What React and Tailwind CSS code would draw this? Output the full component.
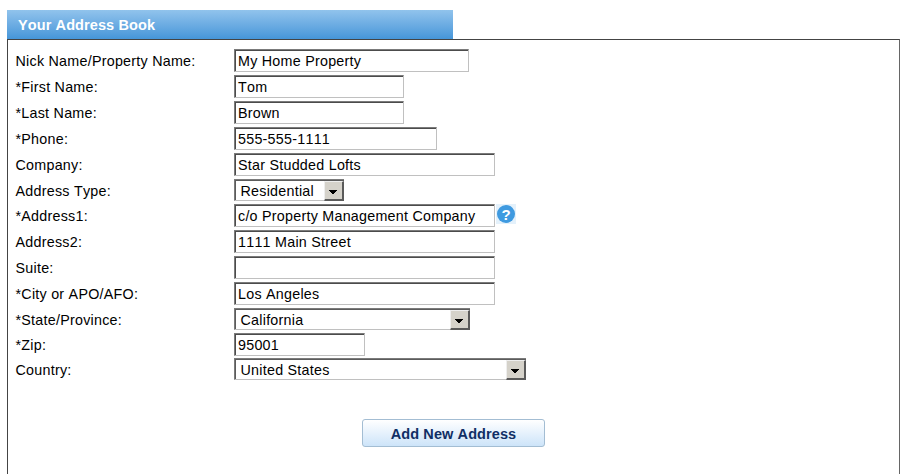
const ROWS = [
  { label: 'Nick Name/Property Name:', value: 'My Home Property', width: 'w-[235px]', height: 'h-[26px]' },
  { label: '*First Name:', value: 'Tom', width: 'w-[170px]', height: 'h-[26px]' },
  { label: '*Last Name:', value: 'Brown', width: 'w-[170px]', height: 'h-[26px]' },
  { label: '*Phone:', value: '555-555-1111', width: 'w-[203px]', height: 'h-[26px]' },
  { label: 'Company:', value: 'Star Studded Lofts', width: 'w-[261px]', height: 'h-[26px]' },
  { label: 'Address Type:', value: 'Residential', width: 'w-[110px]', height: 'h-[25px]', select: true },
  { label: '*Address1:', value: 'c/o Property Management Company', width: 'w-[261px]', height: 'h-[26px]', help: true },
  { label: 'Address2:', value: '1111 Main Street', width: 'w-[261px]', height: 'h-[26px]' },
  { label: 'Suite:', value: '', width: 'w-[261px]', height: 'h-[26px]' },
  { label: '*City or APO/AFO:', value: 'Los Angeles', width: 'w-[261px]', height: 'h-[26px]' },
  { label: '*State/Province:', value: 'California', width: 'w-[236px]', height: 'h-[25px]', select: true },
  { label: '*Zip:', value: '95001', width: 'w-[131px]', height: 'h-[25px]' },
  { label: 'Country:', value: 'United States', width: 'w-[292px]', height: 'h-[26px]', select: true },
];

function TextField({ value, width }) {
  return (
    <div className={`${width} h-[23px] border border-t-[#7b7b7b] border-l-[#7b7b7b] border-r-[#c0c0c0] border-b-[#c0c0c0]`}>
      <div className="h-[21px] border-t border-l border-t-[#4c4c4c] border-l-[#4c4c4c] pt-px pl-[2px] leading-[18px]">
        <span className="whitespace-nowrap">{value}</span>
      </div>
    </div>
  );
}

function SelectField({ value, width }) {
  return (
    <div className={`${width} flex h-[22px] justify-between border-t border-l border-b border-t-[#7b7b7b] border-l-[#7b7b7b] border-b-[#c0c0c0]`}>
      <span className="grow border-t border-l border-[#5c5c5c] pt-px pl-[4.5px] leading-[18px] whitespace-nowrap">{value}</span>
      <span className="flex w-[20px] border-t border-t-[#5c5c5c]">
        <span className="flex h-[20px] w-[20px] items-center justify-center border-t border-l border-r-2 border-b-2 border-t-[#eee] border-l-[#eee] border-r-[#5a5a5a] border-b-[#5a5a5a] bg-[#d5d2ca] pt-[2px] pr-px">
          <svg width="8" height="4" viewBox="0 0 8 4" shapeRendering="crispEdges">
            <path d="M0 0H8V1H7V2H6V3H5V4H3V3H2V2H1V1H0Z" fill="#000" />
          </svg>
        </span>
      </span>
    </div>
  );
}

function HelpIcon() {
  return (
    <span className="ml-px flex h-[20px] w-[20px] items-center justify-center bg-[#e4f1fb]">
      <span className="flex h-[18px] w-[18px] items-center justify-center rounded-full bg-[#3f9ae0] text-[15px] leading-none font-bold tracking-normal text-white">?</span>
    </span>
  );
}

export default function App() {
  return (
    <div className="h-[474px] w-[910px] overflow-hidden bg-white pt-[10px] pl-[7px] font-['Liberation_Sans',Arial,sans-serif] text-[14.3px] tracking-[0.25px] text-black [font-kerning:none]">
      <h1 className="h-[29px] w-[446px] bg-linear-to-b from-[#91c3ec] to-[#4596d9] pl-[11px] text-[14.5px] leading-[30px] font-bold tracking-[0.1px] text-white">
        Your Address Book
      </h1>
      <form className="h-[440px] w-[893px] border border-b-0 border-[#444] border-r-[#666] pt-[9px] pl-[7px]">
        {ROWS.map((row) => (
          <div key={row.label} className={`${row.height} flex items-start`}>
            <label className="w-[219px] pt-[3px] pl-[0.5px] leading-[18px] whitespace-nowrap">{row.label}</label>
            {row.select ? <SelectField {...row} /> : <TextField {...row} />}
            {row.help && <HelpIcon />}
          </div>
        ))}
        <button
          type="button"
          className="mt-[35px] ml-[347px] block h-[28px] w-[183px] rounded-[3px] border border-[#a3bdd3] bg-linear-to-b from-white to-[#cde4f9] pt-px text-[14.5px] leading-[26px] font-bold tracking-[0.1px] text-[#102f65]"
        >
          Add New Address
        </button>
      </form>
    </div>
  );
}
